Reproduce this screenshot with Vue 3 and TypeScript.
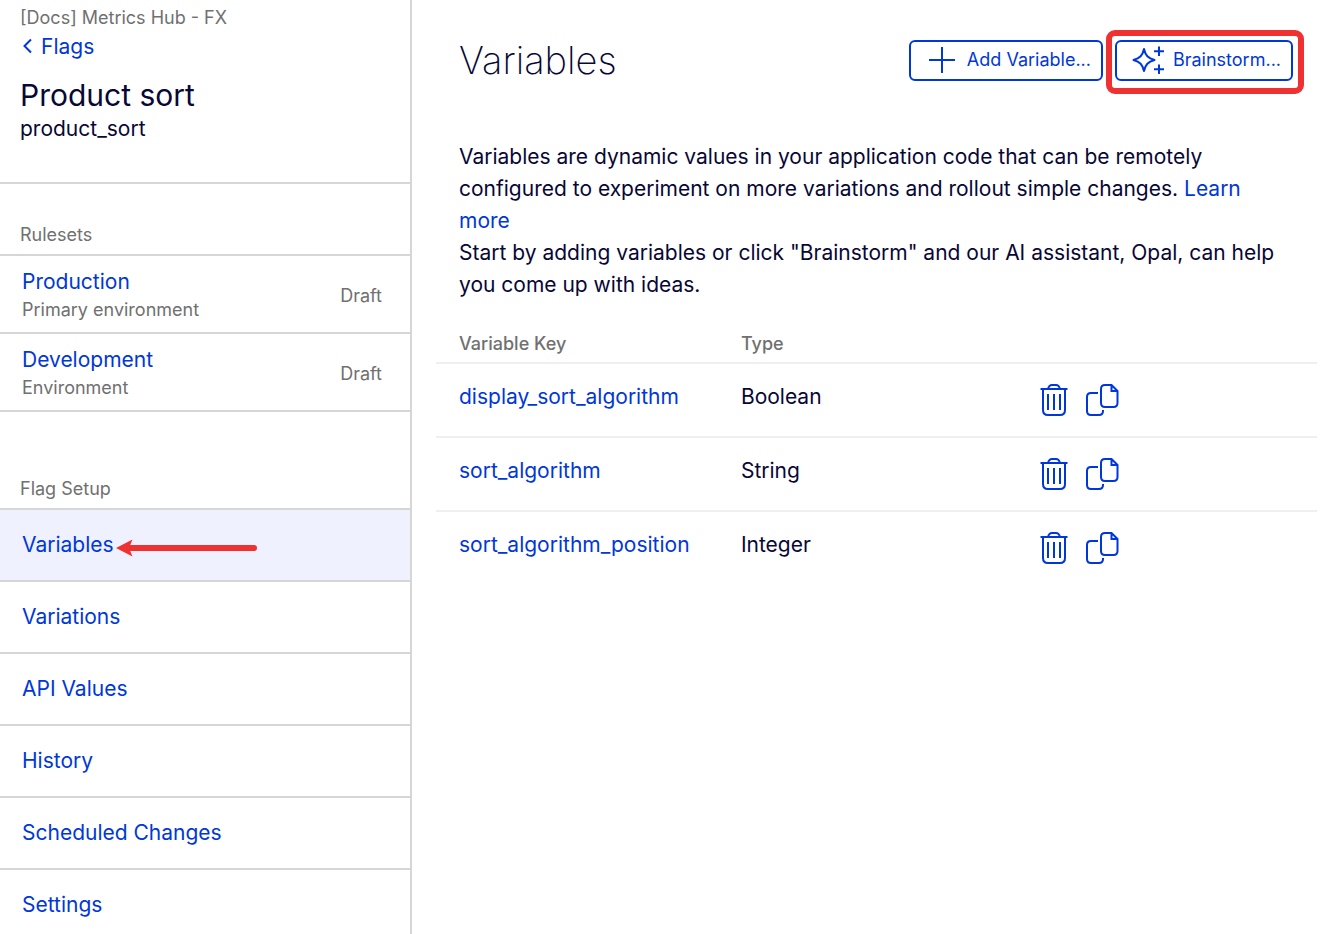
<script setup lang="ts">
interface Ruleset {
  name: string
  kind: string
  status: string
}
interface Variable {
  key: string
  type: string
}

const rulesets: Ruleset[] = [
  { name: 'Production', kind: 'Primary environment', status: 'Draft' },
  { name: 'Development', kind: 'Environment', status: 'Draft' },
]
const setupLinks: string[] = ['Variables', 'Variations', 'API Values', 'History', 'Scheduled Changes', 'Settings']
const current = 'Variables'
const variables: Variable[] = [
  { key: 'display_sort_algorithm', type: 'Boolean' },
  { key: 'sort_algorithm', type: 'String' },
  { key: 'sort_algorithm_position', type: 'Integer' },
]
</script>

<template>
  <div class="layout">
    <aside class="sidebar">
      <header class="flag">
        <p class="project">[Docs] Metrics Hub - FX</p>
        <a class="back" href="#">
          <svg width="11" height="18" viewBox="0 0 11 18" fill="none" stroke="currentColor" stroke-width="2" aria-hidden="true">
            <path d="M9 1.500 2.500 8 9 14.500" />
          </svg>
          Flags
        </a>
        <h2 class="flag-name">Product sort</h2>
        <p class="flag-key">product_sort</p>
      </header>

      <h3 class="section rulesets">Rulesets</h3>
      <ul class="list">
        <li v-for="r in rulesets" :key="r.name" class="ruleset">
          <div>
            <a href="#">{{ r.name }}</a>
            <p class="muted">{{ r.kind }}</p>
          </div>
          <span class="muted">{{ r.status }}</span>
        </li>
      </ul>

      <h3 class="section setup">Flag Setup</h3>
      <nav aria-label="Flag Setup">
        <ul class="list">
          <li v-for="link in setupLinks" :key="link" class="nav-item" :class="{ active: link === current }">
            <a href="#">{{ link }}</a>
            <svg v-if="link === current" class="arrow" width="142" height="22" viewBox="0 0 142 22" aria-hidden="true">
              <path d="M12 14H138" stroke="#ef3131" stroke-width="6" stroke-linecap="round" />
              <path d="M0 14 16.500 5.500 13 14 16.500 22.500Z" fill="#ef3131" />
            </svg>
          </li>
        </ul>
      </nav>
    </aside>

    <main class="content">
      <div class="top">
        <h1>Variables</h1>
        <div class="actions">
          <button type="button" class="btn add">
            <svg width="26" height="26" viewBox="0 0 26 26" fill="none" stroke="currentColor" stroke-width="2" aria-hidden="true">
              <path d="M13 0v26M0 13h26" />
            </svg>
            Add Variable...
          </button>
          <div class="highlight">
            <button type="button" class="btn brain">
              <svg width="33" height="28" viewBox="0 0 33 28" fill="none" stroke="currentColor" stroke-width="2" aria-hidden="true">
                <path d="M12 3C13.500 9.500 16 12 22.500 14 16 16 13.500 18.500 12 25 10.500 18.500 8 16 1.500 14 8 12 10.500 9.500 12 3Z" stroke-linejoin="round" />
                <path d="M27 0.500v9.500M22 5.250h10M27 18.500v9.500M22 23.250h10" />
              </svg>
              Brainstorm...
            </button>
          </div>
        </div>
      </div>

      <div class="intro">
        <p>
          Variables are dynamic values in your application code that can be remotely configured to experiment on more
          variations and rollout simple changes. <a href="#">Learn more</a>
        </p>
        <p>
          Start by adding variables or click "Brainstorm" and our AI assistant, Opal, can help you come up with ideas.
        </p>
      </div>

      <table class="variables">
        <colgroup>
          <col class="col-key" />
          <col class="col-type" />
          <col />
        </colgroup>
        <thead>
          <tr>
            <th scope="col">Variable Key</th>
            <th scope="col">Type</th>
            <td></td>
          </tr>
        </thead>
        <tbody>
          <tr v-for="v in variables" :key="v.key">
            <td><a href="#">{{ v.key }}</a></td>
            <td>{{ v.type }}</td>
            <td>
              <div class="tools">
                <button type="button" class="icon" :aria-label="`Delete ${v.key}`">
                  <svg width="28" height="33" viewBox="0 0 28 33" fill="none" stroke="currentColor" stroke-width="2" aria-hidden="true">
                    <path d="M0.500 5h27M8 5Q9 1 12 1H16Q19 1 20 5M3 5V26Q3 31 8 31H20Q25 31 25 26V5M8 10V26M14 10V26M20 10V26" />
                  </svg>
                </button>
                <button type="button" class="icon" :aria-label="`Copy ${v.key}`">
                  <svg width="33" height="33" viewBox="0 0 33 33" fill="none" stroke="currentColor" stroke-width="2" aria-hidden="true">
                    <path d="M12 9H5Q1 9 1 13V27Q1 31 5 31H13Q17 31 17 27V26" />
                    <path d="M19 1H25.500L31.500 7V19Q31.500 23 27.500 23H19Q15 23 15 19V5Q15 1 19 1ZM25.500 1V7H31.500" />
                  </svg>
                </button>
              </div>
            </td>
          </tr>
        </tbody>
      </table>
    </main>
  </div>
</template>

<style>
body {
  margin: 0;
  background: #fff;
}
</style>

<style scoped>
.layout {
  display: flex;
  height: 100vh;
  overflow: hidden;
  font-family: Inter, 'Liberation Sans', sans-serif;
  font-size: 21px;
  line-height: 32px;
  color: #080736;
}
h1,
h2,
h3,
p,
ul {
  margin: 0;
  padding: 0;
  font-weight: 400;
}
a {
  color: #0037d9;
  text-decoration: none;
}
.sidebar {
  flex: none;
  box-sizing: border-box;
  width: 412px;
  border-right: 2px solid #d6d6d6;
}
.flag {
  padding: 4px 20px 39px;
  border-bottom: 2px solid #d6d6d6;
}
.project,
.section,
.muted {
  font-size: 18px;
  line-height: 28px;
  color: #707070;
}
.back {
  display: flex;
  align-items: center;
  gap: 8px;
  padding-left: 2px;
  line-height: 30px;
}
.flag-name {
  margin-top: 13px;
  font-size: 30px;
  line-height: 40px;
}
.flag-key {
  line-height: 28px;
}
.section {
  padding: 0 20px 5px;
  border-bottom: 2px solid #d6d6d6;
}
.rulesets {
  padding-top: 37px;
}
.setup {
  padding-top: 63px;
}
.list {
  list-style: none;
}
.ruleset {
  display: flex;
  align-items: center;
  justify-content: space-between;
  padding: 12px 28px 8px 22px;
  border-bottom: 2px solid #d6d6d6;
  line-height: 28px;
}
.nav-item {
  display: flex;
  align-items: center;
  gap: 2px;
  padding: 19px 22px;
  border-bottom: 2px solid #d6d6d6;
}
.active {
  background: #eff1ff;
}
.arrow {
  overflow: visible;
}
.content {
  flex: 1;
  min-width: 0;
  padding: 30px 5px 0 24px;
}
.top {
  display: flex;
  align-items: center;
  justify-content: space-between;
  padding: 0 24px 0 23px;
}
h1 {
  font-size: 38px;
  font-weight: 200;
  line-height: 60px;
}
.actions {
  display: flex;
  align-items: center;
  gap: 12px;
}
.btn {
  display: flex;
  align-items: center;
  box-sizing: border-box;
  height: 41px;
  border: 2px solid #0037d9;
  border-radius: 6px;
  background: #fff;
  color: #0037d9;
  font: inherit;
  font-size: 18px;
  white-space: nowrap;
}
.add {
  gap: 12px;
  padding: 0 10px 0 18px;
}
.brain {
  gap: 8px;
  padding: 0 10px 0 15px;
}
.highlight {
  position: relative;
}
.highlight::after {
  content: '';
  position: absolute;
  inset: -10px -11px -13px -9px;
  border: 6px solid #ef3131;
  border-radius: 9px;
  pointer-events: none;
}
.intro {
  max-width: 820px;
  padding: 51px 24px 0 23px;
}
.variables {
  width: 100%;
  margin-top: 24px;
  border-collapse: collapse;
  table-layout: fixed;
}
.col-key {
  width: 32%;
}
.col-type {
  width: 34%;
}
.variables th,
.variables td {
  padding: 0 0 0 23px;
  text-align: left;
}
.variables th {
  height: 37px;
  font-size: 18px;
  font-weight: 500;
  color: #707070;
}
.variables tbody td {
  box-sizing: border-box;
  height: 74px;
  padding-top: 17px;
  border-top: 2px solid #efefef;
  vertical-align: top;
}
.tools {
  display: flex;
  gap: 18px;
  padding-top: 3px;
}
.icon {
  display: flex;
  padding: 0;
  border: 0;
  background: none;
  color: #0037d9;
}
</style>
